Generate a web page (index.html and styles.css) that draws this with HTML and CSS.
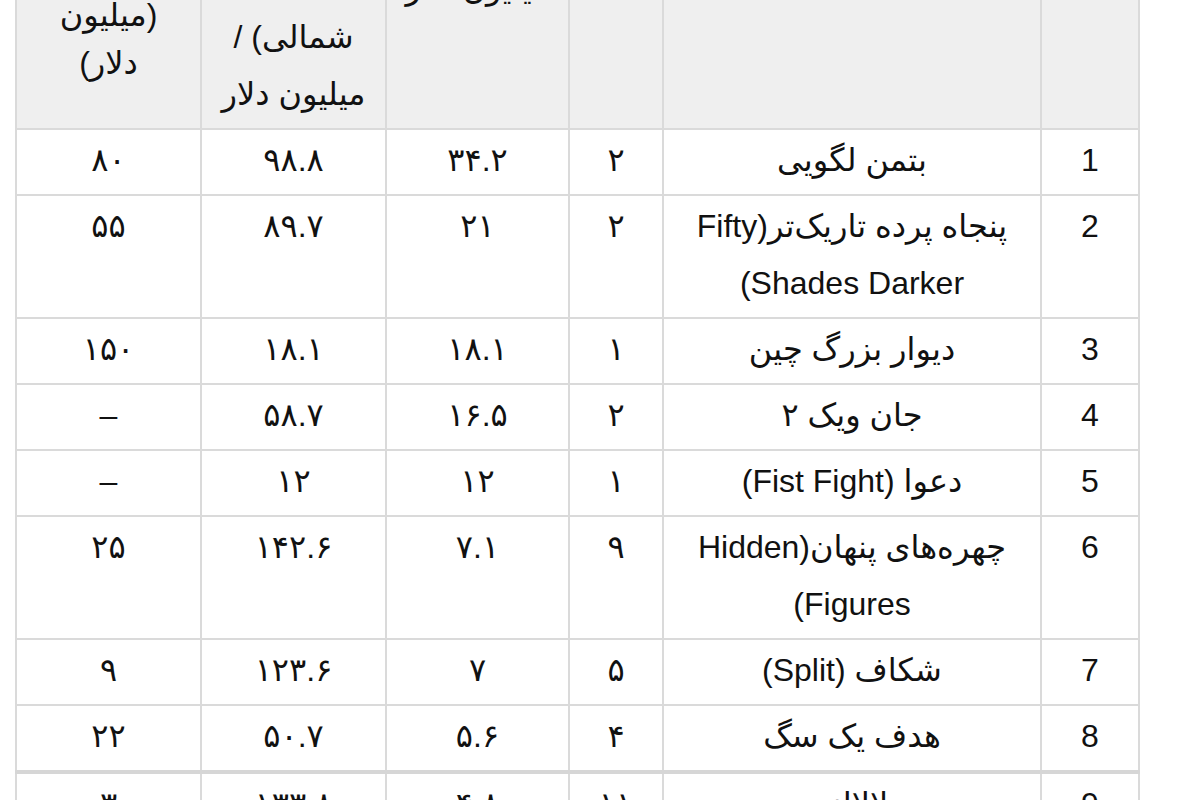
FILE: index.html
```html
<!DOCTYPE html>
<html lang="fa">
<head>
<meta charset="utf-8">
<title>جدول فروش</title>
<link rel="stylesheet" href="styles.css">
</head>
<body>
<div class="wrap">
<table class="box" dir="rtl">
  <colgroup>
    <col class="c-rank">
    <col class="c-title">
    <col class="c-weeks">
    <col class="c-weekend">
    <col class="c-total">
    <col class="c-budget">
  </colgroup>
  <thead>
    <tr>
      <th class="top">رتبه</th>
      <th class="top">نام فیلم</th>
      <th class="top">هفته</th>
      <th class="top wk">فروش هفته<br>میلیون دلار</th>
      <th>فروش کل<br>(آمریکای<br>شمالی) /<br>میلیون دلار</th>
      <th class="bud">بودجه<br>(میلیون<br>دلار)</th>
    </tr>
  </thead>
  <tbody>
    <tr><td>1</td><td>بتمن لگویی</td><td>۲</td><td>۳۴.۲</td><td>۹۸.۸</td><td>۸۰</td></tr>
    <tr><td>2</td><td>پنجاه پرده تاریک‌تر(Fifty Shades Darker)</td><td>۲</td><td>۲۱</td><td>۸۹.۷</td><td>۵۵</td></tr>
    <tr><td>3</td><td>دیوار بزرگ چین</td><td>۱</td><td>۱۸.۱</td><td>۱۸.۱</td><td>۱۵۰</td></tr>
    <tr><td>4</td><td>جان ویک ۲</td><td>۲</td><td>۱۶.۵</td><td>۵۸.۷</td><td>–</td></tr>
    <tr><td>5</td><td>دعوا (Fist Fight)</td><td>۱</td><td>۱۲</td><td>۱۲</td><td>–</td></tr>
    <tr><td>6</td><td>چهره‌های پنهان(Hidden Figures)</td><td>۹</td><td>۷.۱</td><td>۱۴۲.۶</td><td>۲۵</td></tr>
    <tr><td>7</td><td>شکاف (Split)</td><td>۵</td><td>۷</td><td>۱۲۳.۶</td><td>۹</td></tr>
    <tr><td>8</td><td>هدف یک سگ</td><td>۴</td><td>۵.۶</td><td>۵۰.۷</td><td>۲۲</td></tr>
    <tr class="split"><td>9</td><td>لالالند</td><td>۱۱</td><td>۴.۸</td><td>۱۳۳.۸</td><td>۳</td></tr>
  </tbody>
</table>
</div>
</body>
</html>
```
FILE: styles.css
```css
html, body {
  margin: 0;
  padding: 0;
  background: #ffffff;
}

body {
  font-family: "Liberation Sans", "DejaVu Sans", sans-serif;
  color: #111111;
  overflow: hidden;
}

.wrap {
  padding-left: 15px;
}

.box {
  width: 1123px;
  margin-top: -109px;
  border-collapse: collapse;
  table-layout: fixed;
  font-size: 32px;
  line-height: 57px;
}

.c-rank { width: 98px; }
.c-title { width: 378px; }
.c-weeks { width: 94px; }
.c-weekend { width: 183px; }
.c-total { width: 185px; }
.c-budget { width: 185px; }

.box th,
.box td {
  border: 2px solid #dadada;
  padding: 2px 8px 5px;
  text-align: center;
}

.box th {
  background: #efefef;
  font-weight: normal;
  vertical-align: middle;
  white-space: nowrap;
}

.box th.top {
  vertical-align: top;
}

.box th.wk {
  padding-top: 10px;
}

.box th.bud {
  line-height: 48px;
  padding-top: 14px;
}

.box td {
  background: #ffffff;
  vertical-align: top;
}

.box tr.split td {
  border-top: 4px solid #d6d6d6;
}
```
